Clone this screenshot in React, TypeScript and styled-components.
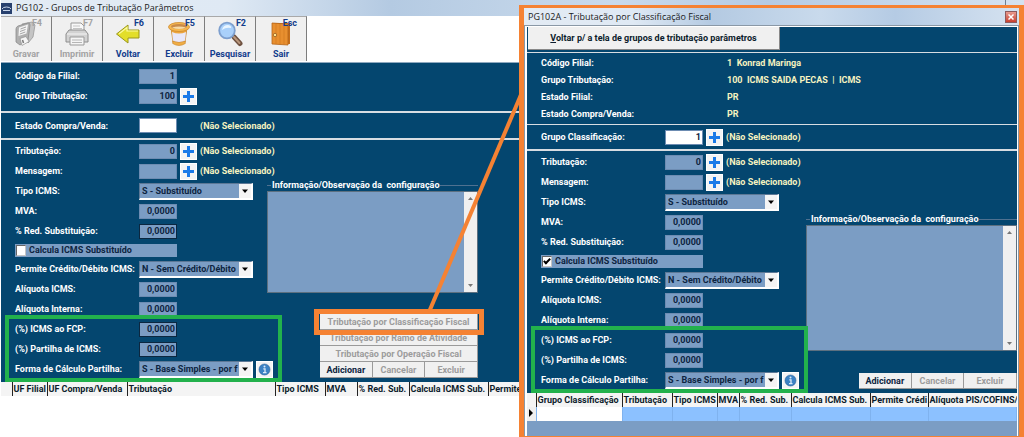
import React, { ReactNode, useId } from "react";
import styled, { createGlobalStyle } from "styled-components";

const navy = "#04466f";
const steel = "#7b9dc4";
const cream = "#f6f3c0";
const orange = "#f58233";
const green = "#22b14c";
const uiFont = `Roboto, "Liberation Sans", Arial, sans-serif`;

const GlobalStyle = createGlobalStyle`
  *, *::before, *::after { box-sizing: border-box; }
  body { margin: 0; background: #fff; }
  body, input, select, textarea, button, table {
    font-family: ${uiFont};
    font-size: 9px;
    font-weight: 700;
    line-height: 12px;
  }
`;

const Desktop = styled.div`
  position: relative;
  min-height: 100vh;
  overflow: hidden;
`;

const MainWindow = styled.section`
  width: 100%;
  padding-left: 1px;
`;

const TitleBar = styled.header<{ $tall?: boolean }>`
  display: flex;
  align-items: center;
  gap: 4px;
  height: ${(p) => (p.$tall ? 17 : 16)}px;
  padding-right: 2px;
  background: linear-gradient(90deg, #e3ebf4 0%, #dfe9f4 22%, #b4cae2 38%, #c9daec 60%, #b5cbe4 75%, #d5e2f0 100%);
`;

const Title = styled.h1`
  flex: 1;
  margin: 0;
  color: #1a1a1a;
  font: 400 9px/14px "Open Sans", "Noto Sans", sans-serif;
  white-space: nowrap;
`;

const WindowEdge = styled.span`
  align-self: stretch;
  width: 17px;
  border-left: 1px solid #6f7f90;
`;

const CloseButton = styled.button`
  display: grid;
  place-items: center;
  width: 12px;
  height: 12px;
  padding: 0;
  border: 1px solid #8d5a5c;
  background: linear-gradient(#e79a8e, #c9402f);
`;

const Toolbar = styled.nav`
  display: flex;
  height: 47px;
  padding-bottom: 1px;
  background: #fff;
  border-bottom: 1px solid #8fa9bf;
`;

const ToolButton = styled.button`
  position: relative;
  display: flex;
  flex-direction: column;
  align-items: center;
  justify-content: space-between;
  width: 51px;
  padding: 4px 0 1px;
  border: 0;
  border-right: 1px solid #7d7d7d;
  border-top: 1px solid #a9a9a9;
  background: #f0f0f0;
  color: #123c8c;
  &:disabled { color: #a3a3a3; }
`;

const Shortcut = styled.kbd`
  position: absolute;
  top: 0;
  right: 9px;
  font: 700 9px/12px ${uiFont};
`;

const Panel = styled.div`
  background: ${navy};
  color: #fff;
`;

const Section = styled.div<{ $top?: number; $bottom?: number; $line?: number }>`
  padding: ${(p) => p.$top ?? 0}px 0 ${(p) => p.$bottom ?? 0}px 14px;
  border-bottom: ${(p) => p.$line ?? 1}px solid #d8dde2;
`;

const Row = styled.div<{ $height?: number }>`
  display: flex;
  align-items: center;
  height: ${(p) => p.$height ?? 20}px;
  white-space: nowrap;
`;

const Label = styled.label`
  flex: none;
  width: 124px;
`;

const InfoLabel = styled.dt`
  flex: none;
  width: 186px;
`;

const InfoList = styled.dl`
  margin: 0;
`;

const Value = styled.output`
  color: ${cream};
`;

const InfoValue = styled.dd`
  margin: 0;
  color: ${cream};
  white-space: pre;
`;

const Field = styled.input<{ $framed?: boolean; $active?: boolean }>`
  flex: none;
  width: 38px;
  height: 15px;
  padding: 0 1px;
  border: 1px solid ${(p) => (p.$framed ? "#0b2740" : "#6d8cb2")};
  border-radius: 0;
  background: ${(p) => (p.$active ? "#fff" : steel)};
  color: #0d2440;
  text-align: right;
  outline: 0;
`;

const PlusButton = styled.button`
  display: grid;
  place-items: center;
  flex: none;
  width: 17px;
  height: 17px;
  margin: 0 3px;
  padding: 0;
  border: 1px solid #fff;
  background: #f4f4f4;
`;

const SelectBox = styled.div`
  position: relative;
  flex: none;
  width: 114px;
  height: 17px;
  border: 1px solid #5c7896;
  border-right: 2px solid #fff;
  border-bottom: 2px solid #fff;
  background: ${steel};
`;

const Select = styled.select`
  display: block;
  width: 100%;
  height: 14px;
  padding: 0 12px 0 2px;
  border: 0;
  background: transparent;
  color: #0d2440;
  appearance: none;
  outline: 0;
`;

const SelectArrow = styled.svg`
  position: absolute;
  top: 0;
  right: 0;
  width: 12px;
  height: 14px;
  background: #f4f4f4;
  pointer-events: none;
`;

const CheckRow = styled.label`
  display: flex;
  align-items: center;
  gap: 3px;
  width: 162px;
  height: 13px;
  background: ${steel};
  color: #0d2440;
`;

const CheckBox = styled.input`
  appearance: none;
  display: grid;
  place-items: center;
  width: 10px;
  height: 11px;
  margin: 0 0 0 1px;
  border: 1px solid #c4c4c4;
  border-top-color: #666;
  border-left-color: #666;
  background: #fff;
  &:checked::after {
    content: "";
    width: 4px;
    height: 7px;
    margin-bottom: 2px;
    border: solid #000;
    border-width: 0 2px 2px 0;
    rotate: 45deg;
  }
`;

const Body = styled.div<{ $formWidth: number }>`
  display: grid;
  grid-template-columns: ${(p) => p.$formWidth}px 211px;
  padding: 1px 0 3px;
`;

const Form = styled.form`
  padding-left: 14px;
`;

const Highlight = styled.div`
  position: relative;
  &::after {
    content: "";
    position: absolute;
    inset: -4px auto -3px -10px;
    width: 277px;
    border: 4px solid ${green};
    z-index: 2;
    pointer-events: none;
  }
`;

const Side = styled.div<{ $top: number }>`
  display: flex;
  flex-direction: column;
  padding-top: ${(p) => p.$top}px;
`;

const NotesGroup = styled.fieldset`
  min-width: 0;
  margin: 0;
  padding: 0;
  border: 0;
  border-top: 1px solid #4f7190;
`;

const NotesLegend = styled.legend`
  margin-left: 4px;
  padding: 0 1px;
  white-space: pre;
`;

const NotesBox = styled.div<{ $height: number }>`
  display: flex;
  height: ${(p) => p.$height}px;
  border: 1px solid #5d7080;
  background: ${steel};
`;

const Notes = styled.textarea`
  flex: 1;
  min-width: 0;
  border: 0;
  background: transparent;
  resize: none;
  outline: 0;
`;

const ScrollTrack = styled.div`
  display: flex;
  flex-direction: column;
  align-items: center;
  justify-content: space-between;
  width: 13px;
  padding: 5px 0;
  background: #f0f0f0;
`;

const Actions = styled.div`
  display: grid;
  grid-template-columns: repeat(3, 1fr);
  width: 158px;
  margin: auto 0 1px auto;
`;

const Action = styled.button<{ $wide?: boolean }>`
  grid-column: ${(p) => (p.$wide ? "1 / -1" : "auto")};
  height: 16px;
  padding: 0;
  border: 0;
  border-right: 1px solid #9a9a9a;
  border-bottom: 1px solid #9a9a9a;
  background: #f0f0f0;
  color: #0c2340;
  white-space: nowrap;
  &:disabled { color: #9c9c9c; }
`;

const Marked = styled.div`
  position: relative;
  display: grid;
  grid-column: 1 / -1;
  &::after {
    content: "";
    position: absolute;
    inset: -5px -6px;
    border: 5px solid ${orange};
    pointer-events: none;
  }
`;

const Grid = styled.table`
  width: 100%;
  table-layout: fixed;
  border-collapse: collapse;
  background: #f4f4f4;
  color: #0c1c2c;
  th, td {
    height: 14px;
    padding: 0 0 0 1px;
    overflow: hidden;
    text-align: left;
    white-space: nowrap;
  }
  th { border-right: 1px solid #222; }
  th:last-child { border-right: 0; }
  td { border-right: 1px solid #7fb2ee; background: #8cc1ff; }
  td:first-child { background: #f0f0f0; }
  td:nth-child(2) { background: #fff; }
`;

const GridSpace = styled.div`
  height: 15px;
  background: ${steel};
`;

const Dialog = styled.section`
  position: absolute;
  top: 5px;
  left: 519px;
  right: 0;
  border: solid ${orange};
  border-width: 3px 5px 2px;
`;

const DialogFrame = styled.div`
  padding: 1px 1px 0 2px;
  border: 1px solid #8a98a6;
  border-bottom: 0;
  background: #fff;
`;

const BackBar = styled.div`
  padding: 0 0 2px 1px;
  border-bottom: 1px solid #d8dde2;
`;

const BackButton = styled.button`
  width: 252px;
  height: 23px;
  padding: 0;
  border: 0;
  border-right: 1px solid #888;
  border-bottom: 1px solid #888;
  background: #f0f0f0;
  color: #0c1c2c;
`;

const Connector = styled.svg`
  position: absolute;
  top: 90px;
  left: 420px;
  pointer-events: none;
`;

function InfoIcon() {
  return (
    <svg width="13" height="13" viewBox="0 0 13 13">
      <circle cx="6.5" cy="6.5" r="5.5" fill="#3b82c4" stroke="#2a6299" strokeWidth=".6" />
      <path d="M5.300 5.800h1.700v3.900M5 9.700h3.500" stroke="#dcebf8" strokeWidth="1.300" fill="none" />
      <circle cx="6.500" cy="3.500" r="1" fill="#dcebf8" />
    </svg>
  );
}

function PlusControl({ name }: { name: string }) {
  return (
    <PlusButton type="button" aria-label={name}>
      <svg width="13" height="13" viewBox="0 0 13 13">
        <path d="M6.5 1v11M1 6.5h11" stroke="#1a7ae8" strokeWidth="3" />
      </svg>
    </PlusButton>
  );
}

function SaveIcon() {
  return (
    <svg width="26" height="26" viewBox="0 0 26 26">
      <path d="M9 3l10-2 3 3-2 12-5 6z" fill="#c4c4c4" stroke="#999" strokeWidth=".8" />
      <path d="M3 8q0-2 2-3l10-3q2 0 2 2l-2 15-8 5-4-3z" fill="#b0b0b0" stroke="#8c8c8c" strokeWidth=".8" />
      <path d="M6 6.500l9-3-1.500 9-8 2.500z" fill="#f4f4f4" />
      <path d="M7.500 8l5.500-2M7 10.500l5.500-2M6.800 13l5.500-2" stroke="#a5a5a5" />
      <path d="M7 17.500l6-2 3 5-7 4z" fill="#f6f6f6" stroke="#888" strokeWidth=".6" />
      <path d="M9.500 19l1 3" stroke="#777" strokeWidth="1.500" />
    </svg>
  );
}

function PrinterIcon() {
  return (
    <svg width="26" height="26" viewBox="0 0 26 26" strokeLinejoin="round">
      <path d="M7 10V2h10l3 3v5" fill="#f8f8f8" stroke="#999" />
      <path d="M9 5h7M9 7.500h9" stroke="#c4c4c4" />
      <path d="M5 9h16l3 4v8H2v-8z" fill="#d2d2d2" stroke="#8e8e8e" />
      <path d="M3 13h20" stroke="#f4f4f4" />
      <path d="M6 16h14v8H6z" fill="#f5f5f5" stroke="#999" />
      <path d="M8 19h10M8 21.500h10" stroke="#b5b5b5" />
    </svg>
  );
}

function BackIcon() {
  return (
    <svg width="26" height="26" viewBox="0 0 26 26">
      <path d="M1.500 13L13 4v5h11v8H13v5z" fill="#e3de2a" stroke="#9a961c" strokeLinejoin="round" />
      <path d="M4 12.700L12 6.500v3.500h11" stroke="#fbfaa0" strokeWidth="1.200" fill="none" />
    </svg>
  );
}

function BinIcon() {
  return (
    <svg width="26" height="26" viewBox="0 0 26 26">
      <path d="M5 7l2 14q6 4 12 0l2-14z" fill="#eda53c" stroke="#c37f27" strokeWidth=".7" />
      <path d="M6 11q7 3 14 0l-1 9q-6 3-12 0z" fill="#e8e8fa" />
      <path d="M6.700 20q6.300 3 12.600 0v2.500q-6.300 4-12.600 0z" fill="#f0ad43" stroke="#c88125" strokeWidth=".6" />
      <ellipse cx="13" cy="6" rx="10.500" ry="4.500" fill="#f5b74f" stroke="#cf8a2f" strokeWidth=".8" />
      <ellipse cx="13" cy="5.500" rx="8" ry="2.500" fill="#c98a48" />
      <path d="M6 6.500q7 3 14 0-7-2-14 0z" fill="#f7dba6" />
    </svg>
  );
}

function SearchIcon() {
  return (
    <svg width="26" height="26" viewBox="0 0 26 26" strokeLinecap="round">
      <path d="M17 16l6 6.500" stroke="#6e5140" strokeWidth="5" />
      <path d="M17 16l5.500 6" stroke="#b9977c" strokeWidth="2" />
      <circle cx="10" cy="9.500" r="7.800" fill="#a9d0fa" stroke="#7d9fce" strokeWidth="1.800" />
      <path d="M5 9q1-5 6-5 4 1 3 3-5-1-9 2z" fill="#e9f5ff" />
    </svg>
  );
}

function DoorIcon() {
  return (
    <svg width="26" height="26" viewBox="0 0 26 26">
      <path d="M4 2h18v21H4z" fill="#c66f1b" />
      <path d="M4 2l16 1v21l-16-1z" fill="#e88f2f" stroke="#b4651b" strokeWidth=".8" />
      <path d="M8 3v20M12 3v20.500M16 3v20.500" stroke="#d47c22" strokeWidth=".8" />
      <circle cx="7" cy="14" r="1.700" fill="#ffe18a" stroke="#8c531b" strokeWidth=".7" />
    </svg>
  );
}

const tools: { name: string; hint: string; icon: ReactNode; disabled?: boolean }[] = [
  { name: "Gravar", hint: "F4", icon: <SaveIcon />, disabled: true },
  { name: "Imprimir", hint: "F7", icon: <PrinterIcon />, disabled: true },
  { name: "Voltar", hint: "F6", icon: <BackIcon /> },
  { name: "Excluir", hint: "F5", icon: <BinIcon /> },
  { name: "Pesquisar", hint: "F2", icon: <SearchIcon /> },
  { name: "Sair", hint: "Esc", icon: <DoorIcon /> },
];

type FieldRowProps = {
  label: string;
  value?: string;
  height?: number;
  framed?: boolean;
  active?: boolean;
  plus?: boolean;
  note?: string;
};

const NoteGap = styled.span`
  width: 23px;
`;

function FieldRow({ label, value = "", height, framed, active, plus, note }: FieldRowProps) {
  const id = useId();
  return (
    <Row $height={height}>
      <Label htmlFor={id}>{label}</Label>
      <Field id={id} defaultValue={value} $framed={framed} $active={active} />
      {plus ? <PlusControl name={`Procurar ${label}`} /> : <NoteGap />}
      {note && <Value htmlFor={id}>{note}</Value>}
    </Row>
  );
}

function SelectRow({ label, value, info }: { label: string; value: string; info?: boolean }) {
  const id = useId();
  return (
    <Row>
      <Label htmlFor={id}>{label}</Label>
      <SelectBox>
        <Select id={id} defaultValue={value}>
          <option>{value}</option>
        </Select>
        <SelectArrow viewBox="0 0 12 14">
          <path d="M3 5.500h6l-3 3.500z" fill="#000" />
        </SelectArrow>
      </SelectBox>
      {info && (
        <PlusButton type="button" aria-label="Informações">
          <InfoIcon />
        </PlusButton>
      )}
    </Row>
  );
}

function TaxForm({ framed, checked }: { framed?: boolean; checked?: boolean }) {
  return (
    <Form>
      <FieldRow label="Tributação:" value="0" plus note="(Não Selecionado)" />
      <FieldRow label="Mensagem:" plus note="(Não Selecionado)" />
      <SelectRow label="Tipo ICMS:" value="S - Substituído" />
      <FieldRow label="MVA:" value="0,0000" />
      <FieldRow label="% Red. Substituição:" value="0,0000" framed={framed} />
      <Row $height={18}>
        <CheckRow>
          <CheckBox type="checkbox" defaultChecked={checked} />
          Calcula ICMS Substituído
        </CheckRow>
      </Row>
      <SelectRow label="Permite Crédito/Débito ICMS:" value="N - Sem Crédito/Débito" />
      <FieldRow label="Alíquota ICMS:" value="0,0000" />
      <FieldRow label="Alíquota Interna:" value="0,0000" />
      <Highlight>
        <FieldRow label="(%) ICMS ao FCP:" value="0,0000" framed={framed} />
        <FieldRow label="(%) Partilha de ICMS:" value="0,0000" framed={framed} />
        <SelectRow label="Forma de Cálculo Partilha:" value="S - Base Simples - por f" info />
      </Highlight>
    </Form>
  );
}

function NotesPanel({ height }: { height: number }) {
  return (
    <NotesGroup>
      <NotesLegend>{"Informação/Observação da  configuração"}</NotesLegend>
      <NotesBox $height={height}>
        <Notes aria-label="Informação/Observação da configuração" />
        <ScrollTrack>
          <svg width="5" height="3" viewBox="0 0 5 3"><path d="M0 3L2.500 0 5 3z" fill="#777" /></svg>
          <svg width="5" height="3" viewBox="0 0 5 3"><path d="M0 0L2.500 3 5 0z" fill="#777" /></svg>
        </ScrollTrack>
      </NotesBox>
    </NotesGroup>
  );
}

function EditActions() {
  return (
    <>
      <Action>Adicionar</Action>
      <Action disabled>Cancelar</Action>
      <Action disabled>Excluir</Action>
    </>
  );
}

type Column = { name: string; width?: number };

const mainColumns: Column[] = [
  { name: "", width: 11 },
  { name: "UF Filial", width: 35 },
  { name: "UF Compra/Venda", width: 80 },
  { name: "Tributação", width: 148 },
  { name: "Tipo ICMS", width: 50 },
  { name: "MVA", width: 32 },
  { name: "% Red. Sub.", width: 52 },
  { name: "Calcula ICMS Sub.", width: 79 },
  { name: "Permite Crédito" },
];

const dialogColumns: Column[] = [
  { name: "", width: 9 },
  { name: "Grupo Classificação", width: 86 },
  { name: "Tributação", width: 50 },
  { name: "Tipo ICMS", width: 45 },
  { name: "MVA", width: 22 },
  { name: "% Red. Sub.", width: 52 },
  { name: "Calcula ICMS Sub.", width: 79 },
  { name: "Permite Crédi", width: 58 },
  { name: "Alíquota PIS/COFINS/" },
];

function DataGrid({ columns, withRow }: { columns: Column[]; withRow?: boolean }) {
  return (
    <Grid>
      <colgroup>
        {columns.map((c) => <col key={c.name} width={c.width} />)}
      </colgroup>
      <thead>
        <tr>{columns.map((c) => <th key={c.name}>{c.name}</th>)}</tr>
      </thead>
      {withRow && (
        <tbody>
          <tr>
            {columns.map((c, i) => (
              <td key={c.name}>
                {i === 0 && (
                  <svg width="6" height="8" viewBox="0 0 6 8"><path d="M1 0l4 4-4 4z" fill="#000" /></svg>
                )}
              </td>
            ))}
          </tr>
        </tbody>
      )}
    </Grid>
  );
}

const summary = [
  ["Código Filial:", "1  Konrad Maringa"],
  ["Grupo Tributação:", "100  ICMS SAIDA PECAS  |  ICMS"],
  ["Estado Filial:", "PR"],
  ["Estado Compra/Venda:", "PR"],
];

export default function App() {
  return (
    <Desktop>
      <GlobalStyle />
      <MainWindow>
        <TitleBar>
          <svg width="11" height="11" viewBox="0 0 11 11">
            <path d="M0 0h11v11H0z" fill="#27406e" />
            <path d="M1 6q1-2 4.500-2T10 6M2 7.500h7" stroke="#c9d6ea" fill="none" />
          </svg>
          <Title>PG102 - Grupos de Tributação Parâmetros</Title>
          <WindowEdge />
        </TitleBar>
        <Toolbar>
          {tools.map((t) => (
            <ToolButton key={t.name} disabled={t.disabled}>
              {t.icon}
              <Shortcut>{t.hint}</Shortcut>
              {t.name}
            </ToolButton>
          ))}
        </Toolbar>
        <Panel>
          <Section $top={3} $bottom={5} $line={2}>
            <FieldRow label="Código da Filial:" value="1" />
            <FieldRow label="Grupo Tributação:" value="100" plus />
          </Section>
          <Section $line={2}>
            <FieldRow label="Estado Compra/Venda:" active height={25} note="(Não Selecionado)" />
          </Section>
          <Body $formWidth={266}>
            <TaxForm framed />
            <Side $top={38}>
              <NotesPanel height={102} />
              <Actions>
                <Marked>
                  <Action $wide disabled>Tributação por Classificação Fiscal</Action>
                </Marked>
                <Action $wide disabled>Tributação por Ramo de Atividade</Action>
                <Action $wide disabled>Tributação por Operação Fiscal</Action>
                <EditActions />
              </Actions>
            </Side>
          </Body>
        </Panel>
        <DataGrid columns={mainColumns} />
      </MainWindow>

      <Connector width="110" height="222" viewBox="0 0 110 222">
        <path d="M103 0L9 222" stroke={orange} strokeWidth="4" />
      </Connector>

      <Dialog role="dialog" aria-label="Tributação por Classificação Fiscal">
        <TitleBar $tall>
          <span />
          <Title as="h2">PG102A - Tributação por Classificação Fiscal</Title>
          <CloseButton aria-label="Fechar">
            <svg width="6" height="6" viewBox="0 0 6 6"><path d="M.5.5l5 5M5.500.5l-5 5" stroke="#fff" strokeWidth="1.500" /></svg>
          </CloseButton>
        </TitleBar>
        <DialogFrame>
          <Panel>
            <BackBar>
              <BackButton><u>V</u>oltar p/ a tela de grupos de tributação parâmetros</BackButton>
            </BackBar>
            <Section $top={1} $bottom={2}>
              <InfoList>
                {summary.map(([name, value]) => (
                  <Row key={name} $height={17}>
                    <InfoLabel>{name}</InfoLabel>
                    <InfoValue>{value}</InfoValue>
                  </Row>
                ))}
              </InfoList>
            </Section>
            <Section $line={2}>
              <FieldRow label="Grupo Classificação:" value="1" active plus height={24} note="(Não Selecionado)" />
            </Section>
            <Body $formWidth={279}>
              <TaxForm checked />
              <Side $top={61}>
                <NotesPanel height={126} />
                <Actions><EditActions /></Actions>
              </Side>
            </Body>
          </Panel>
          <DataGrid columns={dialogColumns} withRow />
          <GridSpace />
        </DialogFrame>
      </Dialog>
    </Desktop>
  );
}
